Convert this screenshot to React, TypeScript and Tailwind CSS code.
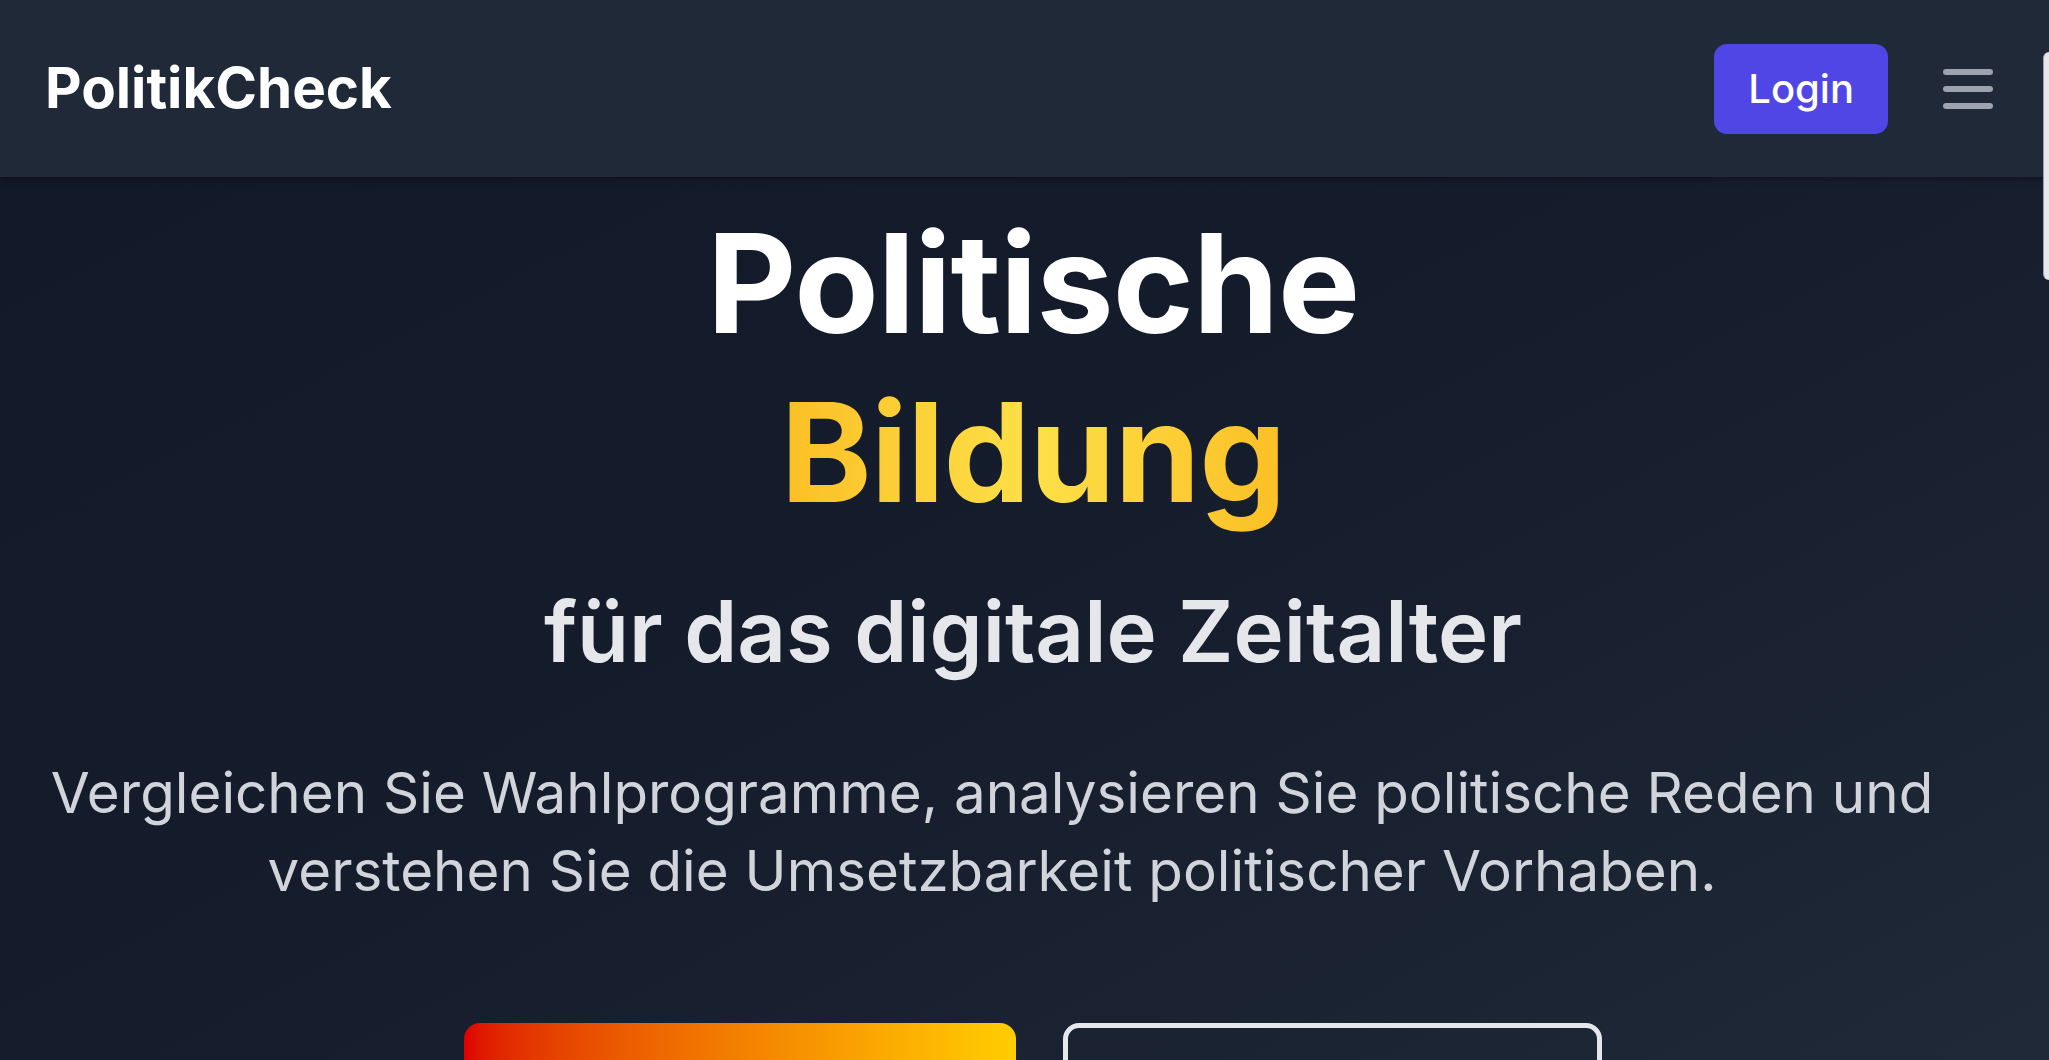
import React from "react";

export default function App() {
  return (
    <div className="relative h-[1060px] w-full overflow-hidden bg-gradient-to-br from-[#111827] via-[#151c2c] to-[#1f2937] font-[Inter,sans-serif]">
      <header className="relative z-10 flex h-[177px] items-center justify-between bg-[#1f2937] pl-[45px] pr-[56px] shadow-[0_2px_6px_rgba(0,0,0,0.35)]">
        <div className="text-[56.5px] font-bold leading-none text-white">PolitikCheck</div>
        <div className="flex items-center gap-[55px]">
          <button className="flex h-[90px] items-center rounded-[13px] bg-[#4f46e5] px-[34px] text-[40px] font-medium text-white">
            Login
          </button>
          <button aria-label="Menü" className="flex h-[50px] w-[50px] items-center justify-center">
            <svg width="50" height="40" viewBox="0 0 50 40" fill="none">
              <line x1="3" y1="3" x2="47" y2="3" stroke="#9ca3af" strokeWidth="6" strokeLinecap="round" />
              <line x1="3" y1="20" x2="47" y2="20" stroke="#9ca3af" strokeWidth="6" strokeLinecap="round" />
              <line x1="3" y1="37" x2="47" y2="37" stroke="#9ca3af" strokeWidth="6" strokeLinecap="round" />
            </svg>
          </button>
        </div>
      </header>

      <main className="flex flex-col items-center pt-[21px] text-center">
        <h1 className="ml-[17px] text-[138px] font-bold leading-[169px] tracking-[-1px] text-white">
          Politische
          <br />
          <span className="inline-block bg-gradient-to-r from-[#fbbf24] via-[#fde047] to-[#fbbf24] bg-clip-text text-transparent">
            Bildung
          </span>
        </h1>
        <h2 className="ml-[17px] mt-[46px] text-[85px] font-semibold leading-[100px] text-[#e5e7eb]">
          für das digitale Zeitalter
        </h2>
        <p className="mr-[65px] mt-[72px] text-[56.5px] leading-[78px] text-[#d1d5db]">
          Vergleichen Sie Wahlprogramme, analysieren Sie politische Reden und
          <br />
          verstehen Sie die Umsetzbarkeit politischer Vorhaben.
        </p>
        <div className="ml-[17px] mt-[113px] flex gap-[47px]">
          <button
            aria-label="Jetzt starten"
            className="h-[150px] w-[552px] rounded-[16px] bg-gradient-to-r from-[#dd0000] to-[#ffce00]"
          />
          <button
            aria-label="Mehr erfahren"
            className="h-[150px] w-[539px] rounded-[16px] border-[5px] border-[#e5e7eb]"
          />
        </div>
      </main>

      <div className="absolute right-0 top-[52px] z-20 h-[228px] w-[6px] rounded-l-full border-l border-[#9aa0aa] bg-[#e5e7eb]" />
    </div>
  );
}
